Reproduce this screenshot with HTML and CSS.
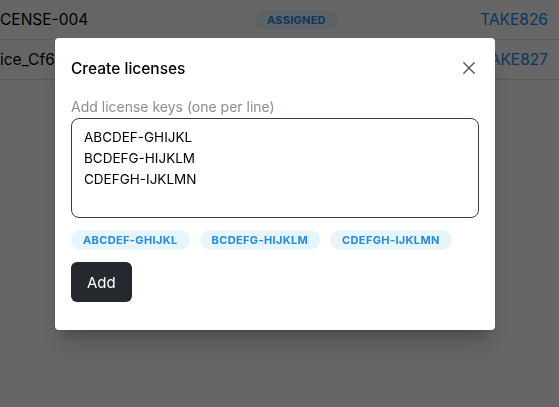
FILE: index.html
```html
<!DOCTYPE html>
<html lang="en">
<head>
<meta charset="utf-8">
<title>Create licenses</title>
<link rel="stylesheet" href="styles.css">
</head>
<body>
<div class="page">
  <div class="row">
    <span class="cell-name">CENSE-004</span>
    <span class="cell-status"><span class="status-badge">Assigned</span></span>
    <span class="cell-user">TAKE826</span>
  </div>
  <div class="row">
    <span class="cell-name">ice_Cf69a2</span>
    <span class="cell-status"></span>
    <span class="cell-user">TAKE827</span>
  </div>
</div>

<div class="overlay">
  <div class="modal" role="dialog" aria-label="Create licenses">
    <div class="modal-header">
      <h2 class="modal-title">Create licenses</h2>
      <button class="close-btn" aria-label="Close">
        <svg width="12" height="12" viewBox="0 0 12 12" fill="none" stroke="currentColor" stroke-width="1.3" stroke-linecap="round"><path d="M0.8 0.8L11.2 11.2M11.2 0.8L0.8 11.2"/></svg>
      </button>
    </div>
    <div class="modal-body">
      <label class="field-label">Add license keys (one per line)</label>
      <div class="textarea">
        <div>ABCDEF-GHIJKL</div>
        <div>BCDEFG-HIJKLM</div>
        <div>CDEFGH-IJKLMN</div>
      </div>
      <div class="badges">
        <span class="badge">ABCDEF-GHIJKL</span>
        <span class="badge">BCDEFG-HIJKLM</span>
        <span class="badge">CDEFGH-IJKLMN</span>
      </div>
      <button class="add-btn">Add</button>
    </div>
  </div>
</div>
</body>
</html>
```

FILE: styles.css
```css
* { box-sizing: border-box; }

html, body {
  margin: 0;
  padding: 0;
  background: #ffffff;
  font-family: Inter, "Noto Sans", sans-serif;
  color: #000;
}

.page {
  width: 559px;
  height: 407px;
  overflow: hidden;
}

.row {
  display: grid;
  grid-template-columns: 240px 1fr 120px;
  align-items: center;
  height: 40px;
  border-bottom: 1px solid #dee2e6;
  font-size: 15.5px;
  padding-right: 11px;
}

.cell-name { white-space: nowrap; }

.cell-status {
  display: flex;
  justify-content: flex-start;
  padding-left: 15px;
}

.status-badge {
  display: inline-flex;
  align-items: center;
  height: 20px;
  padding: 0 12px;
  border-radius: 20px;
  background: #e7f5ff;
  color: #228be6;
  font-size: 11px;
  font-weight: 700;
  letter-spacing: 0.25px;
  text-transform: uppercase;
}

.cell-user {
  text-align: right;
  color: #228be6;
}

.overlay {
  position: fixed;
  inset: 0;
  background: rgba(0, 0, 0, 0.6);
  display: flex;
  align-items: flex-start;
  padding: 38px 0 0 55px;
}

.modal {
  width: 440px;
  background: #fff;
  border-radius: 4px;
  box-shadow: 0 1px 3px rgba(0,0,0,0.08), 0 20px 25px -5px rgba(0,0,0,0.18), 0 10px 10px -5px rgba(0,0,0,0.12);
  padding-bottom: 28px;
}

.modal-header {
  display: flex;
  align-items: center;
  justify-content: space-between;
  height: 60px;
  padding: 0 16px;
}

.modal-title {
  margin: 0;
  font-size: 15.5px;
  font-weight: 500;
  color: #000;
}

.close-btn {
  width: 20px;
  height: 20px;
  padding: 0;
  border: 0;
  background: transparent;
  color: #495057;
  display: flex;
  align-items: center;
  justify-content: center;
}

.modal-body {
  padding: 0 16px;
  display: flex;
  flex-direction: column;
  align-items: flex-start;
}

.field-label {
  font-size: 14px;
  line-height: 18px;
  color: #868e96;
  margin-bottom: 2px;
}

.textarea {
  width: 100%;
  height: 100px;
  border: 1px solid #3a3d42;
  border-radius: 8px;
  padding: 8px 12px;
  font-size: 13.5px;
  line-height: 21px;
  color: #000;
}

.badges {
  display: flex;
  gap: 10px;
  margin-top: 12px;
}

.badge {
  display: inline-flex;
  align-items: center;
  height: 20px;
  padding: 0 12px;
  border-radius: 20px;
  background: #e7f5ff;
  color: #228be6;
  font-size: 11px;
  font-weight: 700;
  letter-spacing: 0.35px;
}

.add-btn {
  margin-top: 12px;
  height: 40px;
  padding: 0 16px;
  border: 0;
  border-radius: 6px;
  background: #25292f;
  color: #fff;
  font-family: Inter, "Noto Sans", sans-serif;
  font-size: 15px;
  font-weight: 400;
}
```
